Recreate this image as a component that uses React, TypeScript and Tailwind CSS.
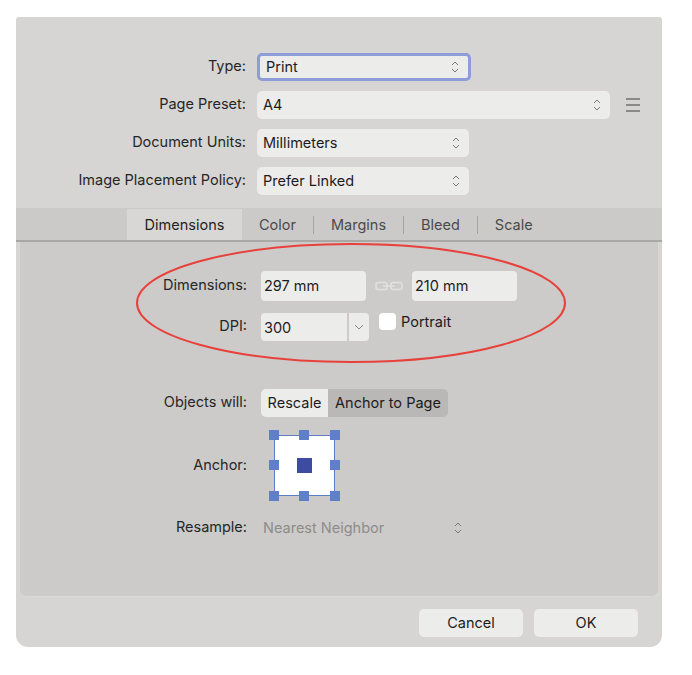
import React from "react";

const font = { fontFamily: "Inter, 'Liberation Sans', sans-serif" };

function Stepper({ className = "" }: { className?: string }) {
  return (
    <svg width="8" height="14" viewBox="0 0 8 14" className={className}>
      <path d="M1 5 L4 2 L7 5" fill="none" stroke="#7a7978" strokeWidth="1" />
      <path d="M1 9 L4 12 L7 9" fill="none" stroke="#7a7978" strokeWidth="1" />
    </svg>
  );
}

function Select({ value, w, focus = false }: { value: string; w: string; focus?: boolean }) {
  return (
    <div
      className={`${w} h-[28px] rounded-[5px] bg-[#ececeb] flex items-center justify-between pl-[6px] pr-[9px] text-[14.5px] text-[#1c1c1c] ${
        focus ? "border-[3px] border-[#8e9cd8] pl-[2px] pr-[6px]" : ""
      }`}
    >
      <span>{value}</span>
      <Stepper />
    </div>
  );
}

function Label({ children }: { children: React.ReactNode }) {
  return <div className="text-right text-[14.5px] text-[#262626] leading-none">{children}</div>;
}

export default function App() {
  return (
    <div className="w-[692px] h-[675px] bg-white pt-[17px] pl-[16px]" style={font}>
      <div className="relative w-[646px] h-[630px] bg-[#d6d5d4] rounded-b-[12px] rounded-t-[3px] flex flex-col overflow-hidden">
        {/* top form */}
        <div className="h-[191px] pt-[36px] flex flex-col gap-[10px]">
          <div className="flex items-center h-[28px]">
            <div className="w-[230px] -mt-[2px]"><Label>Type:</Label></div>
            <div className="ml-[11px]"><Select value="Print" w="w-[214px]" focus /></div>
          </div>
          <div className="flex items-center h-[28px]">
            <div className="w-[230px] -mt-[2px]"><Label>Page Preset:</Label></div>
            <div className="ml-[11px]"><Select value="A4" w="w-[353px]" /></div>
            <div className="ml-[16px] flex flex-col gap-[4px]">
              <div className="w-[14px] h-[2px] bg-[#8a8988]" />
              <div className="w-[14px] h-[2px] bg-[#8a8988]" />
              <div className="w-[14px] h-[2px] bg-[#8a8988]" />
            </div>
          </div>
          <div className="flex items-center h-[28px]">
            <div className="w-[230px] -mt-[2px]"><Label>Document Units:</Label></div>
            <div className="ml-[11px]"><Select value="Millimeters" w="w-[212px]" /></div>
          </div>
          <div className="flex items-center h-[28px]">
            <div className="w-[230px] -mt-[2px]"><Label>Image Placement Policy:</Label></div>
            <div className="ml-[11px]"><Select value="Prefer Linked" w="w-[212px]" /></div>
          </div>
        </div>

        {/* tab bar */}
        <div className="h-[34px] bg-[#cbcac9] border-b-2 border-[#a9a8a7] flex items-end pl-[111px] text-[14.5px]">
          <div className="h-[31px] w-[115px] bg-[#d8d7d6] flex items-center justify-center text-[#1e1e1e]">Dimensions</div>
          <div className="h-[31px] flex items-center text-[#4a4a4a]">
            <span className="px-[17px]">Color</span>
            <span className="w-[1px] h-[18px] bg-[#a5a4a3]" />
            <span className="px-[17px]">Margins</span>
            <span className="w-[1px] h-[18px] bg-[#a5a4a3]" />
            <span className="px-[17px]">Bleed</span>
            <span className="w-[1px] h-[18px] bg-[#a5a4a3]" />
            <span className="px-[17px]">Scale</span>
          </div>
        </div>

        {/* panel */}
        <div className="mx-[3px] h-[355px] bg-[#cccbc9] border-x border-b border-[#d9d8d7] rounded-b-[7px] flex flex-col pt-[29px]">
          <div className="flex items-center h-[30px]">
            <div className="w-[227px] -mt-[2px]"><Label>Dimensions:</Label></div>
            <div className="ml-[14px] w-[105px] h-[30px] rounded-[4px] bg-[#ececeb] flex items-center pl-[3px] text-[14.5px] text-[#1c1c1c]">297 mm</div>
            <svg width="28" height="10" viewBox="0 0 28 10" className="mx-[9px]">
              <rect x="1" y="1.5" width="11" height="7" rx="2" fill="none" stroke="#e2e1e0" strokeWidth="1.5" />
              <rect x="16" y="1.5" width="11" height="7" rx="2" fill="none" stroke="#e2e1e0" strokeWidth="1.5" />
              <line x1="8" y1="5" x2="20" y2="5" stroke="#e2e1e0" strokeWidth="1.5" />
            </svg>
            <div className="w-[105px] h-[30px] rounded-[4px] bg-[#ececeb] flex items-center pl-[3px] text-[14.5px] text-[#1c1c1c]">210 mm</div>
          </div>
          <div className="flex items-start h-[28px] mt-[12px]">
            <div className="w-[227px] pt-[6px]"><Label>DPI:</Label></div>
            <div className="ml-[14px] w-[86px] h-[28px] rounded-l-[4px] bg-[#ececeb] flex items-center pl-[3px] pt-[2px] text-[14.5px] text-[#1c1c1c]">300</div>
            <div className="ml-[2px] w-[20px] h-[28px] rounded-r-[4px] bg-[#ececeb] flex items-center justify-center">
              <svg width="10" height="6" viewBox="0 0 10 6">
                <path d="M1 1 L5 5 L9 1" fill="none" stroke="#8a8988" strokeWidth="1" />
              </svg>
            </div>
            <div className="ml-[10px] w-[17px] h-[17px] rounded-[4px] bg-white" />
            <div className="ml-[5px] text-[14.5px] text-[#1c1c1c] leading-[17px]">Portrait</div>
          </div>

          <div className="flex items-center h-[28px] mt-[48px]">
            <div className="w-[227px] -mt-[2px]"><Label>Objects will:</Label></div>
            <div className="ml-[14px] flex h-[28px] rounded-[5px] overflow-hidden text-[14.5px] text-[#1c1c1c]">
              <div className="w-[67px] bg-[#ececeb] flex items-center justify-center">Rescale</div>
              <div className="w-[120px] bg-[#b9b8b7] flex items-center justify-center">Anchor to Page</div>
            </div>
          </div>

          <div className="flex items-center h-[71px] mt-[13px]">
            <div className="w-[227px]"><Label>Anchor:</Label></div>
            <div className="ml-[22px] relative w-[71px] h-[71px]">
              <div className="absolute left-[5px] top-[5px] w-[61px] h-[61px] bg-white border border-[#5b7cc6]" />
              {[
                "left-0 top-0",
                "left-[30px] top-0",
                "left-[61px] top-0",
                "left-0 top-[30px]",
                "left-[61px] top-[30px]",
                "left-0 top-[61px]",
                "left-[30px] top-[61px]",
                "left-[61px] top-[61px]",
              ].map((c) => (
                <div key={c} className={`absolute ${c} w-[10px] h-[10px] bg-[#5f7fc8]`} />
              ))}
              <div className="absolute left-[28px] top-[28px] w-[15px] h-[15px] bg-[#3d4ba0]" />
            </div>
          </div>

          <div className="flex items-center h-[28px] mt-[13px]">
            <div className="w-[227px] -mt-[2px]"><Label>Resample:</Label></div>
            <div className="ml-[16px] w-[199px] flex items-center justify-between text-[14.5px] text-[#8d8c8b]">
              <span>Nearest Neighbor</span>
              <Stepper />
            </div>
          </div>
        </div>

        {/* buttons */}
        <div className="flex justify-end gap-[11px] pr-[24px] mt-[12px]">
          <div className="w-[104px] h-[28px] rounded-[5px] bg-[#ececeb] flex items-center justify-center text-[14.5px] text-[#1c1c1c]">Cancel</div>
          <div className="w-[104px] h-[28px] rounded-[5px] bg-[#ececeb] flex items-center justify-center text-[14.5px] text-[#1c1c1c]">OK</div>
        </div>

        {/* annotation ellipse */}
        <svg className="absolute left-0 top-0 pointer-events-none" width="646" height="630" viewBox="0 0 646 630">
          <ellipse cx="335" cy="286" rx="214" ry="59" fill="none" stroke="#e8413b" strokeWidth="2" />
        </svg>
      </div>
    </div>
  );
}
